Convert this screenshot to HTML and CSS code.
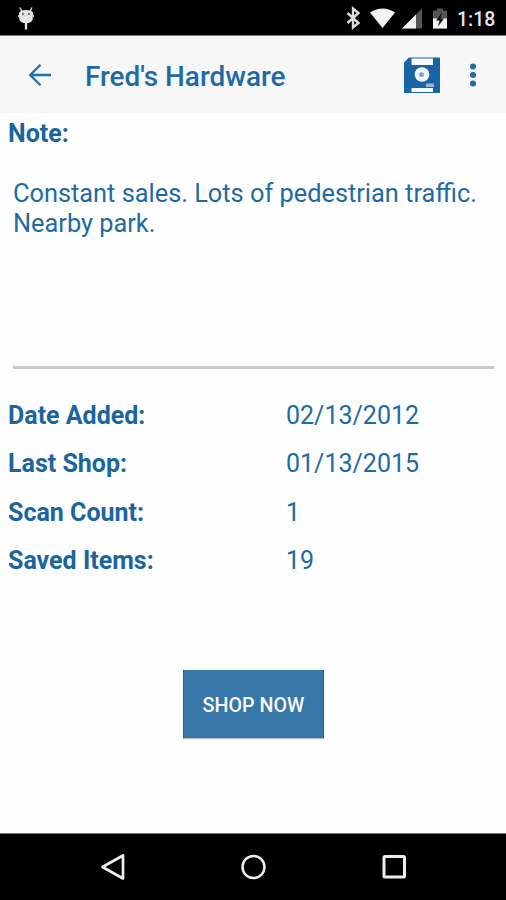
FILE: index.html
```html
<!DOCTYPE html>
<html lang="en">
<head>
<meta charset="utf-8">
<title>Fred's Hardware</title>
<link rel="stylesheet" href="styles.css">
</head>
<body>
<header class="status">
  <svg class="mascot" width="20" height="26" viewBox="0 0 20 26"><path d="M4 2.500l2 4M16 2.500l-2 4" stroke="#e4e4e4" stroke-width="1.400"/><path d="M3 8q1-3 7-3t7 3v3.500q0 5.500-4.500 6.500h-5q-4.500-1-4.500-6.500z" fill="#e4e4e4"/><path d="M2 11h2M16 11h2" stroke="#ccc" stroke-width="2"/><path d="M10 18v6.500" stroke="#ddd" stroke-width="2.400"/><circle cx="7" cy="9" r="1.200" fill="#777"/><circle cx="13" cy="9" r="1.200" fill="#777"/></svg>
  <svg class="status-icons" width="106" height="26" viewBox="0 0 106 26">
    <path d="M2.500 8l11 10-5.500 4.500v-19l5.500 4.500-11 10" fill="none" stroke="#ddd" stroke-width="2.400"/>
    <path d="M25 7.500q12.500-8 25 0L37.500 23z" fill="#f2f2f2"/>
    <path d="M57 23.500L77 3.500v20z" fill="#555"/><path d="M57 23.500l14-14v14z" fill="#f2f2f2"/>
    <path d="M88 5.500h4v-2h6v2h4v18H88z" fill="#555"/><path d="M88 13.500h14v10H88z" fill="#f2f2f2"/><path d="M97 7.500l-6 8h3.500l-1.500 6 6-8h-3.500z" fill="#111"/>
  </svg>
  <span class="clock">1:18</span>
</header>
<div class="toolbar">
  <svg class="back" width="24" height="24" viewBox="0 0 24 24"><path d="M12.500 1.700L2.200 12l10.300 10.300M2.200 12H23" fill="none" stroke="#2270a9" stroke-width="2.300"/></svg>
  <h1 class="title">Fred's Hardware</h1>
  <svg class="save" width="36" height="36" viewBox="0 0 36 36"><path d="M5 0.500h31V36H0V5.500z" fill="#1864a6"/><path d="M7.500 1.500h21.500v6.500H7.500zM7.500 31h21.500v4H7.500z" fill="#f7f7f7"/><circle cx="18" cy="17.500" r="7.300" fill="#f5f9fd"/><circle cx="17.500" cy="17.500" r="2.600" fill="#8cb4d5"/><path d="M17 16v3" stroke="#4c86b8"/><rect x="22" y="26.500" width="8" height="3.500" fill="#8fb6d7"/></svg>
  <svg class="more" width="8" height="26" viewBox="0 0 8 26"><g fill="#1f69a5"><circle cx="4" cy="4.500" r="3"/><circle cx="4" cy="13" r="3"/><circle cx="4" cy="21.500" r="3"/></g></svg>
</div>
<main class="content">
  <h2 class="label note-label">Note:</h2>
  <div class="note">Constant sales. Lots of pedestrian traffic.<br>Nearby park.</div>
  <dl class="facts">
    <dt class="label">Date Added:</dt><dd class="value">02/13/2012</dd>
    <dt class="label">Last Shop:</dt><dd class="value">01/13/2015</dd>
    <dt class="label">Scan Count:</dt><dd class="value">1</dd>
    <dt class="label">Saved Items:</dt><dd class="value">19</dd>
  </dl>
  <button class="shop" type="button">SHOP NOW</button>
</main>
<nav class="navbar">
  <svg width="28" height="30" viewBox="0 0 28 30"><path d="M24 3.500v23L3.500 15z" fill="none" stroke="#eee" stroke-width="2.700" stroke-linejoin="round"/></svg>
  <svg width="28" height="30" viewBox="0 0 28 30"><circle cx="13.500" cy="15" r="11" fill="none" stroke="#eee" stroke-width="2.500"/></svg>
  <svg width="28" height="30" viewBox="0 0 28 30"><rect x="4" y="4.500" width="20.500" height="20.500" rx="1" fill="none" stroke="#eee" stroke-width="3"/></svg>
</nav>
</body>
</html>
```
FILE: styles.css
```css
* { box-sizing: border-box; }
body {
  margin: 0;
  height: 900px;
  display: flex;
  flex-direction: column;
  background: #fefefe;
  color: #1f6aa3;
  font-family: Roboto, sans-serif;
  overflow: hidden;
}
svg { display: block; flex: none; }
.status {
  height: 36px;
  display: flex;
  align-items: center;
  background: #000;
  border-bottom: 1px solid #777;
}
.mascot { margin-left: 16px; }
.status-icons { margin-left: 309px; }
.clock {
  margin-left: 6px;
  margin-top: 3px;
  color: #e6e6e6;
  font-size: 19.400px;
  font-weight: 500;
}
.toolbar {
  height: 77px;
  display: flex;
  align-items: center;
  background: #f7f7f7;
}
.back { margin-left: 28px; }
.title {
  margin: 4px 0 0 33px;
  width: 319px;
  font-size: 27.900px;
  font-weight: 500;
  white-space: nowrap;
}
.more { margin-left: 29px; }
.content {
  flex: 1;
  display: flex;
  flex-direction: column;
}
.label {
  margin: 0;
  font-size: 25px;
  font-weight: 700;
  line-height: 30px;
  color: #1b659f;
}
.note-label { margin: 6px 0 0 8px; }
.note {
  height: 190px;
  margin: 30px 12px 0 13px;
  border-bottom: 3px solid #c9c9c9;
  font-size: 25.350px;
  line-height: 29.700px;
  white-space: nowrap;
}
.facts {
  margin: 32px 0 0 8px;
  display: grid;
  grid-template-columns: 278px 1fr;
  grid-auto-rows: 30px;
  row-gap: 18.300px;
}
.value {
  margin: 0;
  font-size: 25px;
  line-height: 30px;
}
.shop {
  width: 141px;
  height: 68px;
  margin: 94px 0 0 183px;
  padding: 3px 0 0;
  border: 0 solid #1c64a0;
  border-width: 0 1px;
  background: #3776a8;
  box-shadow: 0 1px 1px #bbb;
  color: #f6faff;
  font: 500 19.700px Roboto, sans-serif;
}
.navbar {
  height: 67px;
  display: flex;
  justify-content: space-between;
  align-items: center;
  padding: 0 98px 0 99px;
  background: #000;
  border-top: 1px solid #777;
}
```
